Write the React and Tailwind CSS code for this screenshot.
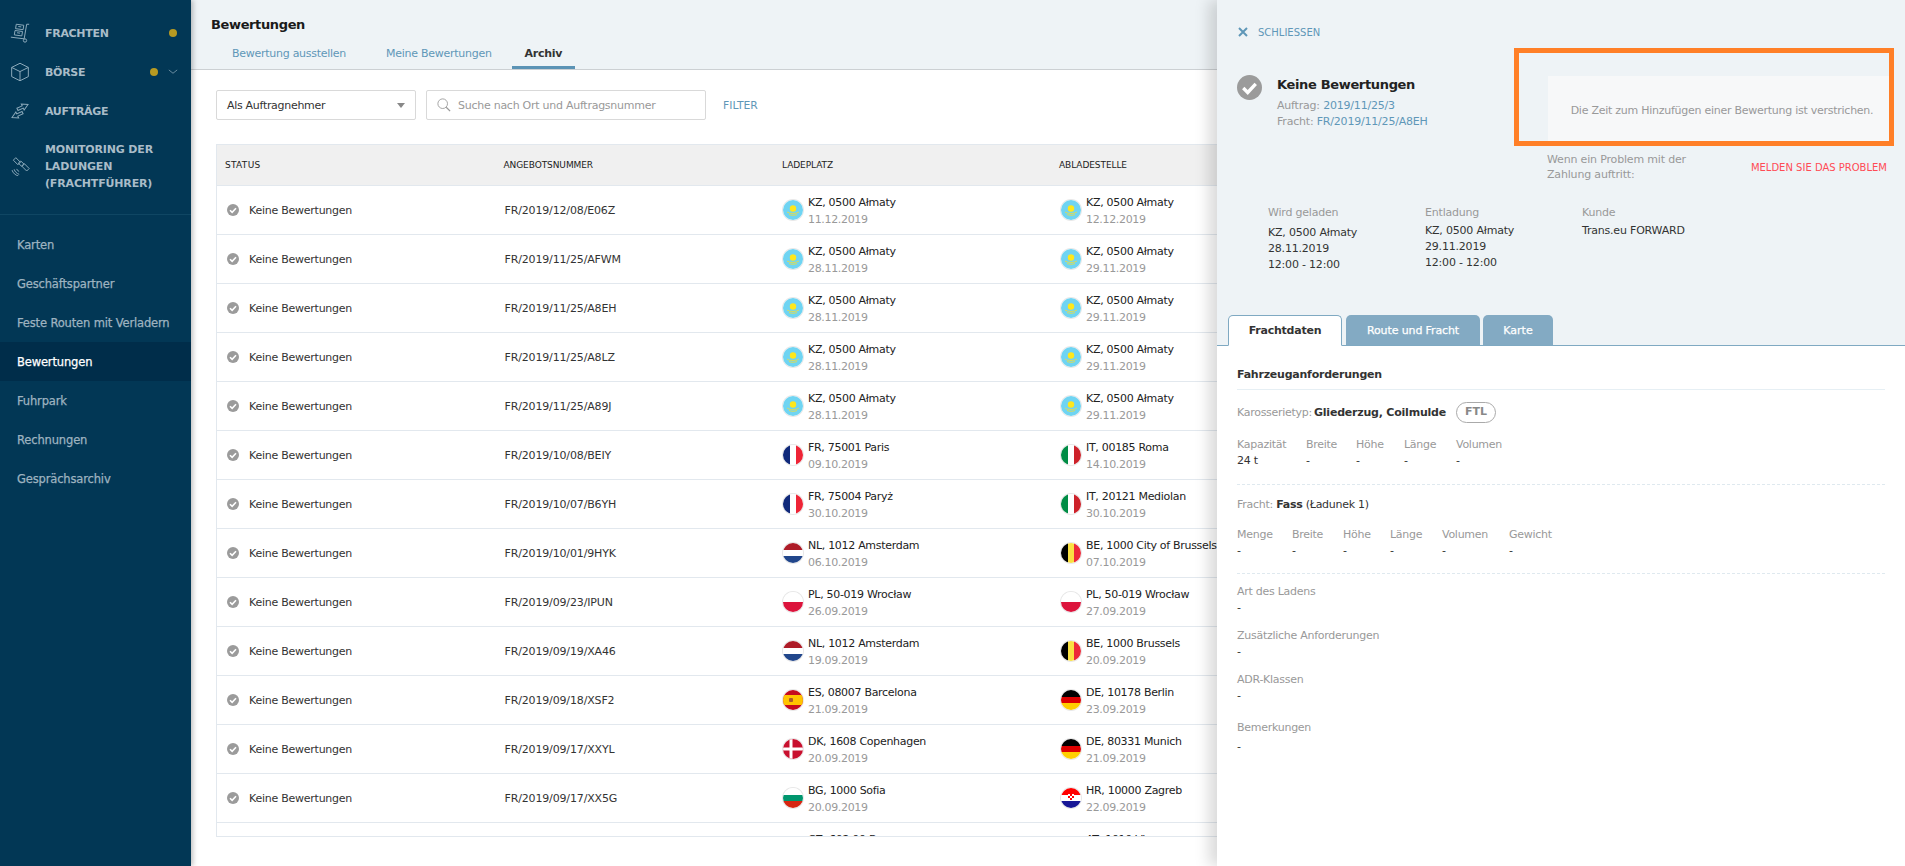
import React from 'react'

const rows = [
  ['FR/2019/12/08/E06Z', 'kz', 'KZ, 0500 Ałmaty', '11.12.2019', 'kz', 'KZ, 0500 Ałmaty', '12.12.2019'],
  ['FR/2019/11/25/AFWM', 'kz', 'KZ, 0500 Ałmaty', '28.11.2019', 'kz', 'KZ, 0500 Ałmaty', '29.11.2019'],
  ['FR/2019/11/25/A8EH', 'kz', 'KZ, 0500 Ałmaty', '28.11.2019', 'kz', 'KZ, 0500 Ałmaty', '29.11.2019'],
  ['FR/2019/11/25/A8LZ', 'kz', 'KZ, 0500 Ałmaty', '28.11.2019', 'kz', 'KZ, 0500 Ałmaty', '29.11.2019'],
  ['FR/2019/11/25/A89J', 'kz', 'KZ, 0500 Ałmaty', '28.11.2019', 'kz', 'KZ, 0500 Ałmaty', '29.11.2019'],
  ['FR/2019/10/08/BEIY', 'fr', 'FR, 75001 Paris', '09.10.2019', 'it', 'IT, 00185 Roma', '14.10.2019'],
  ['FR/2019/10/07/B6YH', 'fr', 'FR, 75004 Paryż', '30.10.2019', 'it', 'IT, 20121 Mediolan', '30.10.2019'],
  ['FR/2019/10/01/9HYK', 'nl', 'NL, 1012 Amsterdam', '06.10.2019', 'be', 'BE, 1000 City of Brussels', '07.10.2019'],
  ['FR/2019/09/23/IPUN', 'pl', 'PL, 50-019 Wrocław', '26.09.2019', 'pl', 'PL, 50-019 Wrocław', '27.09.2019'],
  ['FR/2019/09/19/XA46', 'nl', 'NL, 1012 Amsterdam', '19.09.2019', 'be', 'BE, 1000 Brussels', '20.09.2019'],
  ['FR/2019/09/18/XSF2', 'es', 'ES, 08007 Barcelona', '21.09.2019', 'de', 'DE, 10178 Berlin', '23.09.2019'],
  ['FR/2019/09/17/XXYL', 'dk', 'DK, 1608 Copenhagen', '20.09.2019', 'de', 'DE, 80331 Munich', '21.09.2019'],
  ['FR/2019/09/17/XX5G', 'bg', 'BG, 1000 Sofia', '20.09.2019', 'hr', 'HR, 10000 Zagreb', '22.09.2019'],
]

function Flag({ code }) {
  return (
    <svg viewBox="0 0 20 20" className="w-5 h-5 rounded-full shrink-0 shadow-[0_0_0_1px_#e8e8e8]">
      <rect width="20" height="20" fill="#fff" />
      {code === 'kz' && (
        <g>
          <rect width="20" height="20" fill="#6fd4f2" />
          <circle cx="10" cy="8.5" r="3.2" fill="#ffe71a" />
          <path d="M4 12c3 2 9 2 12 0M6 14.5c2 1 6 1 8 0" stroke="#d8dc5c" strokeWidth="1" fill="none" />
        </g>
      )}
      {code === 'fr' && (
        <g>
          <rect width="7" height="20" fill="#10297a" />
          <rect x="13" width="7" height="20" fill="#ee2436" />
        </g>
      )}
      {code === 'it' && (
        <g>
          <rect width="7" height="20" fill="#008c45" />
          <rect x="13" width="7" height="20" fill="#cd212a" />
        </g>
      )}
      {code === 'nl' && (
        <g>
          <rect width="20" height="7" fill="#ae1c28" />
          <rect y="13" width="20" height="7" fill="#21468b" />
        </g>
      )}
      {code === 'be' && (
        <g>
          <rect width="7" height="20" fill="#000" />
          <rect x="7" width="6" height="20" fill="#fae042" />
          <rect x="13" width="7" height="20" fill="#ed2939" />
        </g>
      )}
      {code === 'pl' && <rect y="10" width="20" height="10" fill="#dc143c" />}
      {code === 'es' && (
        <g>
          <rect width="20" height="20" fill="#c60b1e" />
          <rect y="5" width="20" height="10" fill="#ffc400" />
          <rect x="6" y="8" width="4" height="4" rx="1" fill="#ad5a2a" />
        </g>
      )}
      {code === 'de' && (
        <g>
          <rect width="20" height="7" fill="#000" />
          <rect y="7" width="20" height="6" fill="#dd0000" />
          <rect y="13" width="20" height="7" fill="#ffce00" />
        </g>
      )}
      {code === 'dk' && (
        <g>
          <rect width="20" height="20" fill="#c8102e" />
          <rect x="6.5" width="3" height="20" fill="#fff" />
          <rect y="8.5" width="20" height="3" fill="#fff" />
        </g>
      )}
      {code === 'bg' && (
        <g>
          <rect y="7" width="20" height="6" fill="#00966e" />
          <rect y="13" width="20" height="7" fill="#d62612" />
        </g>
      )}
      {code === 'hr' && (
        <g>
          <rect width="20" height="7" fill="#f00" />
          <rect y="13" width="20" height="7" fill="#171796" />
          <rect x="7" y="4" width="6" height="8" fill="#f00" />
          <path d="M7 6h2v2H7zM11 6h2v2h-2zM9 8h2v2H9zM7 10h2v2H7zM11 10h2v2h-2z" fill="#fff" />
        </g>
      )}
      {code === 'cz' && (
        <g>
          <rect y="10" width="20" height="10" fill="#d7141a" />
          <path d="M0 0l10 10L0 20z" fill="#11457e" />
        </g>
      )}
      {code === 'at' && <path d="M0 0h20v7H0zM0 13h20v7H0z" fill="#ed2939" />}
    </svg>
  )
}

function CheckIcon({ big }) {
  return (
    <svg viewBox="0 0 24 24" className={big ? 'w-[25px] h-[25px] shrink-0' : 'w-3 h-3 shrink-0'}>
      <circle cx="12" cy="12" r="12" fill="#9b9b9b" />
      <path d="M6 12.5l4.3 4.3L18 8.6" stroke="#fff" strokeWidth="3.2" fill="none" />
    </svg>
  )
}

function NavIcon({ type }) {
  const p = { fill: 'none', stroke: '#8ba9ba', strokeWidth: 1.200 }
  return (
    <svg viewBox="0 0 24 24" className="w-5 h-5 shrink-0" {...p}>
      {type === 'truck' && (
        <g>
          <path d="M23 1.500h-3L17 19 1 17" />
          <circle cx="18" cy="21" r="2" />
          <path d="M7.500 1.500l9 1.200-.8 5.300-9-1.200zM6 9l9 1.200-.8 5.300-9-1.200zM10 4.200l3.500.5M8.500 11.700l3.500.5" />
        </g>
      )}
      {type === 'box' && <path d="M12 1.500l10 5v11l-10 5-10-5v-11zM2 6.500l10 5 10-5M12 11.500v11" />}
      {type === 'swap' && (
        <g transform="rotate(-25 12 12)">
          <path d="M10 7.500h7V5l7 4-7 4v-2.500h-7z" />
          <path d="M14 13.500H7V11l-7 4 7 4v-2.500h7z" />
        </g>
      )}
      {type === 'sat' && (
        <g>
          <path d="M4 5l3-3 5.500 5.500-3 3zM14 12l3-3 6 6-3 3zM10 8.500l3-2.500 4 4-3 2.500z" />
          <path d="M8 15.500c.5 1.500 1.500 2.500 3 3M5 16c1 3 3 5 6 6M2.500 17c1 3.500 4 6 7.500 7" />
        </g>
      )}
    </svg>
  )
}

function Dot() {
  return <span className="block w-2 h-2 rounded-full bg-[#b79a22]" />
}

function MainNav({ icon, children, dot, chevron }) {
  return (
    <div className="flex items-center h-[39px] pl-[10px]">
      <NavIcon type={icon} />
      <div className="ml-[15px] pt-[1px] text-[#a9bcc8] font-bold text-[11px] leading-[17px] tracking-[-0.3px] w-[105px]">{children}</div>
      {dot && <div className={chevron ? '' : 'ml-[19px]'}><Dot /></div>}
      {chevron && (
        <svg viewBox="0 0 12 8" className="w-[10px] h-2 ml-[10px]" fill="none" stroke="#7d9bad">
          <path d="M1 1.500l5 4 5-4" />
        </svg>
      )}
    </div>
  )
}

function SubNav({ children, active }) {
  return (
    <div className={'flex items-center h-[39px] pl-[17px] pt-[3px] text-[11.5px] tracking-[-0.15px] [-webkit-text-stroke:0.25px] ' + (active ? 'bg-[#002d4a] text-white' : 'text-[#9eb3c0]')}>
      {children}
    </div>
  )
}

function Sidebar() {
  return (
    <aside className="w-[191px] h-full shrink-0 bg-[#023755] shadow-[2px_0_5px_rgba(0,0,0,0.25)] z-10 pt-[13px]">
      <MainNav icon="truck" dot>FRACHTEN</MainNav>
      <MainNav icon="box" dot chevron>BÖRSE</MainNav>
      <MainNav icon="swap">AUFTRÄGE</MainNav>
      <div className="flex items-center pl-[10px] pt-[10px] pb-[22px] border-b border-[#0f4663]">
        <NavIcon type="sat" />
        <div className="ml-[15px] pt-[1px] text-[#a9bcc8] font-bold text-[11px] leading-[17px] tracking-[-0.16px]">
          MONITORING DER<br />LADUNGEN<br />(FRACHTFÜHRER)
        </div>
      </div>
      <div className="pt-[10px]">
        <SubNav>Karten</SubNav>
        <SubNav>Geschäftspartner</SubNav>
        <SubNav>Feste Routen mit Verladern</SubNav>
        <SubNav active>Bewertungen</SubNav>
        <SubNav>Fuhrpark</SubNav>
        <SubNav>Rechnungen</SubNav>
        <SubNav>Gesprächsarchiv</SubNav>
      </div>
    </aside>
  )
}

function Place({ code, city, date }) {
  return (
    <div className="flex items-center">
      <Flag code={code} />
      <div className="ml-[5px] pt-[1px] whitespace-nowrap">
        <div className="text-[#222] leading-[17px] tracking-[-0.3px]">{city}</div>
        <div className="text-[#999] leading-[17px] tracking-[-0.33px]">{date}</div>
      </div>
    </div>
  )
}

const grid = 'grid grid-cols-[278.5px_278.5px_277px_278px] items-center'

function Table() {
  return (
    <div className="ml-[25px] mt-[24px] h-[693px] w-[1300px] overflow-hidden border border-[#e2e8ee] text-[11px]">
      <div className={grid + ' h-[41px] pt-[2px] bg-[#f0f0f0] border-b border-[#e2e8ee] text-[9px] tracking-[-0.08px] text-[#222]'}>
        <div className="pl-2 tracking-[0.3px]">STATUS</div>
        <div className="pl-2">ANGEBOTSNUMMER</div>
        <div className="pl-2">LADEPLATZ</div>
        <div className="pl-2">ABLADESTELLE</div>
      </div>
      {rows.map(r => (
        <div key={r[0]} className={grid + ' h-[49px] border-b border-[#e2e8ee]'}>
          <div className="flex items-center pl-[10px] text-[#333]">
            <CheckIcon />
            <span className="ml-[10px] pt-[2px] tracking-[-0.25px]">Keine Bewertungen</span>
          </div>
          <div className="pl-[9px] pt-[2px] text-[#333] tracking-[-0.15px]">{r[0]}</div>
          <div className="pl-[9px]"><Place code={r[1]} city={r[2]} date={r[3]} /></div>
          <div className="pl-[10px]"><Place code={r[4]} city={r[5]} date={r[6]} /></div>
        </div>
      ))}
      {/* letzte Zeile, wird vom Rahmen abgeschnitten */}
      <div className={grid + ' h-[49px]'}>
        <div />
        <div />
        <div className="pl-[9px]"><Place code="cz" city="CZ, 602 00 Brno" date={'\u00a0'} /></div>
        <div className="pl-[10px]"><Place code="at" city="AT, 1010 Vienna" date={'\u00a0'} /></div>
      </div>
    </div>
  )
}

function Main() {
  return (
    <main className="flex-1 min-w-0 h-full overflow-hidden">
      <header className="h-[70px] bg-[#eef3f6] border-b border-[#ccd0d3] pl-5">
        <h1 className="pt-[16px] text-[13px] leading-[18px] font-bold text-[#1a1a1a] tracking-[-0.37px]">Bewertungen</h1>
        <nav className="flex mt-[7px] ml-[1px] text-[11px] h-[28px] tracking-[-0.27px]">
          <a className="px-5 pt-[5px] text-[#5f97b8]">Bewertung ausstellen</a>
          <a className="px-5 pt-[5px] text-[#5f97b8]">Meine Bewertungen</a>
          <a className="px-[13px] pt-[5px] font-bold text-[#333] border-b-[3px] border-[#5b93b5]">Archiv</a>
        </nav>
      </header>
      <div className="flex items-center ml-[25px] mt-[20px] h-[30px] text-[11px]">
        <div className="flex items-center justify-between w-[200px] h-full px-[10px] bg-white border border-[#d9d9d9] rounded-[2px] text-[#333]">
          <span className="pt-[2px] tracking-[-0.3px]">Als Auftragnehmer</span>
          <span className="w-0 h-0 border-x-4 border-x-transparent border-t-[5px] border-t-[#888]" />
        </div>
        <div className="flex items-center w-[280px] h-full ml-[10px] px-[10px] bg-white border border-[#d9d9d9] rounded-[2px] text-[#999]">
          <svg viewBox="0 0 16 16" className="w-[14px] h-[14px] shrink-0" fill="none" stroke="#999">
            <circle cx="6.500" cy="6.500" r="5.500" />
            <path d="M10.500 10.500l4.500 4.500" strokeWidth="1.500" />
          </svg>
          <span className="ml-[7px] pt-[2px] tracking-[-0.26px]">Suche nach Ort und Auftragsnummer</span>
        </div>
        <span className="ml-[17px] pt-[3px] text-[10.800px] text-[#5f97b8]">FILTER</span>
      </div>
      <Table />
    </main>
  )
}

function Detail({ title, lines, gap }) {
  return (
    <div className="w-[157px] text-[11px] tracking-[-0.2px]">
      <div className={'text-[#999] leading-[16px] ' + gap}>{title}</div>
      {lines.map(l => <div key={l} className="text-[#333] leading-[16px]">{l}</div>)}
    </div>
  )
}

function Specs({ cols, className }) {
  return (
    <div className={'flex text-[11px] leading-[16px] tracking-[-0.27px] ' + className}>
      {cols.map(([label, val, w]) => (
        <div key={label} className={w}>
          <div className="text-[#999]">{label}</div>
          <div className="text-[#333]">{val}</div>
        </div>
      ))}
    </div>
  )
}

function Field({ label, className, valueClass }) {
  return (
    <div className={'text-[11px] leading-[16px] tracking-[-0.27px] ' + className}>
      <div className="text-[#999]">{label}</div>
      <div className={'text-[#333] ' + (valueClass || '')}>-</div>
    </div>
  )
}

function Panel() {
  return (
    <section className="absolute top-0 right-0 bottom-0 w-[688px] bg-white shadow-[-8px_0_14px_rgba(0,0,0,0.15)] flex flex-col">
      <div className="h-[345px] bg-[#eef3f6] relative">
        <div className="flex items-center pt-[26px] pl-[21px] h-[38px] text-[10px] text-[#5f97b8]">
          <svg viewBox="0 0 10 10" className="w-[10px] h-[10px]" stroke="#5f97b8" strokeWidth="2">
            <path d="M1 1l8 8M9 1l-8 8" />
          </svg>
          <span className="ml-[10px]">SCHLIESSEN</span>
        </div>
        <div className="flex mt-[37px] pl-[20px]">
          <CheckIcon big />
          <div className="ml-[15px]">
            <div className="text-[13px] font-bold text-[#222] leading-[20px] tracking-[-0.34px]">Keine Bewertungen</div>
            <div className="text-[11px] leading-[16px] text-[#999] mt-[3px] tracking-[-0.2px]">Auftrag: <span className="text-[#5f97b8]">2019/11/25/3</span></div>
            <div className="text-[11px] leading-[16px] text-[#999] tracking-[-0.2px]">Fracht: <span className="text-[#5f97b8]">FR/2019/11/25/A8EH</span></div>
          </div>
        </div>
        <div className="absolute left-[331px] top-[76px] right-[11px] h-[65px] bg-[#f7f8f9] flex items-center justify-center pt-[5px] pl-[2px] text-[11px] text-[#999] whitespace-nowrap tracking-[-0.26px]">
          Die Zeit zum Hinzufügen einer Bewertung ist verstrichen.
        </div>
        <div className="absolute left-[297px] top-[48px] w-[380px] h-[98px] border-[5px] border-[#ff7f27]" />
        <div className="absolute left-[330px] top-[152px] w-[348px] flex items-center justify-between text-[11px]">
          <div className="text-[#999] leading-[15px] w-[170px] tracking-[-0.17px]">Wenn ein Problem mit der Zahlung auftritt:</div>
          <div className="text-[10px] text-[#ff4b55] mr-[8px] whitespace-nowrap">MELDEN SIE DAS PROBLEM</div>
        </div>
        <div className="flex absolute left-[51px] top-[205px]">
          <Detail title="Wird geladen" gap="mb-[4px]" lines={['KZ, 0500 Ałmaty', '28.11.2019', '12:00 - 12:00']} />
          <Detail title="Entladung" gap="mb-[2px]" lines={['KZ, 0500 Ałmaty', '29.11.2019', '12:00 - 12:00']} />
          <Detail title="Kunde" gap="mb-[2px]" lines={['Trans.eu FORWARD']} />
        </div>
        <div className="absolute left-[11px] bottom-[-1px] flex items-end text-[11px] z-10">
          <div className="flex items-center justify-center w-[114px] h-[31px] pt-[2px] bg-white border border-[#7fa9c2] border-b-white rounded-t-[5px] text-[#333] font-bold tracking-[-0.22px]">Frachtdaten</div>
          <div className="flex items-center justify-center w-[134px] h-[30px] pt-[2px] mb-[1px] ml-[4px] bg-[#83aac3] rounded-t-[5px] text-white tracking-[-0.12px] [-webkit-text-stroke:0.25px]">Route und Fracht</div>
          <div className="flex items-center justify-center w-[70px] h-[30px] pt-[2px] mb-[1px] ml-[3px] bg-[#83aac3] rounded-t-[5px] text-white [-webkit-text-stroke:0.25px]">Karte</div>
        </div>
      </div>
      <div className="flex-1 border-t border-[#7fa9c2] px-5">
        <div className="h-[44px] border-b border-[#e6eff4] flex items-center pt-[16px] text-[11px] font-bold text-[#333] tracking-[-0.23px]">Fahrzeuganforderungen</div>
        <div className="flex items-center h-[22px] mt-[11px] text-[11px]">
          <span className="pt-[3px] text-[#999] tracking-[-0.28px]">Karosserietyp:</span>
          <span className="pt-[3px] ml-[2px] font-bold text-[#333] tracking-[-0.21px]">Gliederzug, Coilmulde</span>
          <span className="ml-[10px] px-[8px] h-[21px] pt-[1px] flex items-center rounded-full border border-[#aaa] text-[#888] font-bold">FTL</span>
        </div>
        <Specs className="mt-[14px]" cols={[['Kapazität', '24 t', 'w-[69px]'], ['Breite', '-', 'w-[50px]'], ['Höhe', '-', 'w-[48px]'], ['Länge', '-', 'w-[52px]'], ['Volumen', '-', 'w-[60px]']]} />
        <div className="mt-[15px] border-t border-dashed border-[#dfe9ef]" />
        <div className="mt-[12px] text-[11px] leading-[16px] tracking-[-0.27px]">
          <span className="text-[#999]">Fracht: </span><span className="font-bold text-[#333]">Fass</span><span className="text-[#333]"> (Ładunek 1)</span>
        </div>
        <Specs className="mt-[14px]" cols={[['Menge', '-', 'w-[55px]'], ['Breite', '-', 'w-[51px]'], ['Höhe', '-', 'w-[47px]'], ['Länge', '-', 'w-[52px]'], ['Volumen', '-', 'w-[67px]'], ['Gewicht', '-', 'w-[60px]']]} />
        <div className="mt-[14px] border-t border-dashed border-[#dfe9ef]" />
        <Field label="Art des Ladens" className="mt-[10px]" />
        <Field label="Zusätzliche Anforderungen" className="mt-[12px]" />
        <Field label="ADR-Klassen" className="mt-[12px]" />
        <Field label="Bemerkungen" className="mt-[16px]" valueClass="mt-[3px]" />
      </div>
    </section>
  )
}

export default function App() {
  return (
    <div className="relative flex h-[866px] w-[1905px] overflow-hidden bg-white font-['DejaVu_Sans',sans-serif]">
      <Sidebar />
      <Main />
      <Panel />
    </div>
  )
}
